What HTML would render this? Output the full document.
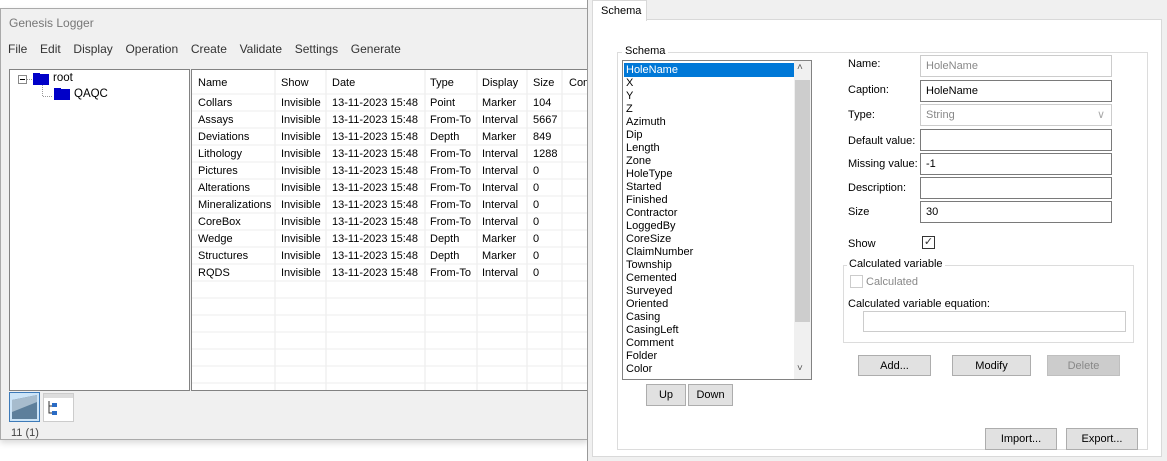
<!DOCTYPE html>
<html><head><style>
*{margin:0;padding:0;box-sizing:border-box}
body{width:1167px;height:461px;position:relative;overflow:hidden;background:#fff;font-family:"Liberation Sans",sans-serif;font-size:11px;color:#000}
.a{position:absolute;white-space:nowrap}
.lw{left:0;top:8px;width:588px;height:432px;background:#f0f0f0;border:1px solid #aaa;box-shadow:0 3px 6px rgba(0,0,0,.15)}
.menu span{margin-right:12.7px}
.panel{background:#fff;border:1px solid #828282}
.btn{position:absolute;background:#e1e1e1;border:1px solid #adadad;text-align:center;line-height:20px}
.inp{position:absolute;left:920px;width:192px;height:22px;border:1px solid #7a7a7a;background:#fff;line-height:20px;padding-left:5px}
.lbl{position:absolute;left:848px}
</style></head><body>
<div class="a lw"></div>
<div class="a" style="left:9px;top:16px;color:#777;font-size:12px">Genesis Logger</div>
<div class="a menu" style="left:8px;top:42px;color:#333;font-size:12px"><span>File</span><span>Edit</span><span>Display</span><span>Operation</span><span>Create</span><span>Validate</span><span>Settings</span><span>Generate</span></div>
<div class="a panel" style="left:9px;top:69px;width:181px;height:322px"></div>
<svg class="a" style="left:17px;top:72px" width="100" height="32">
<rect x="1.5" y="3.5" width="8" height="8" fill="#fff" stroke="#888"/><line x1="3" y1="7.5" x2="8" y2="7.5" stroke="#000"/>
<path d="M10 7.5H16M25.5 13V24.5H36" stroke="#999" stroke-dasharray="1 1" fill="none"/>
<rect x="16" y="2" width="16" height="11" fill="#0000c8"/><rect x="16" y="1" width="7" height="3" fill="#0000c8"/>
<rect x="37" y="17" width="16" height="11" fill="#0000c8"/><rect x="37" y="16" width="7" height="3" fill="#0000c8"/>
</svg>
<div class="a" style="left:53px;top:72px;font-size:11.5px">root</div>
<div class="a" style="left:74px;top:88px;font-size:11.5px">QAQC</div>
<div class="a panel" style="left:191px;top:69px;width:397px;height:322px;border-right:none"></div>
<svg class="a" style="left:192px;top:70px" width="396" height="320">
<g stroke="#e8e8e8">
<line x1="83" y1="0" x2="83" y2="320"/><line x1="134" y1="0" x2="134" y2="320"/><line x1="233" y1="0" x2="233" y2="320"/><line x1="285" y1="0" x2="285" y2="320"/><line x1="335" y1="0" x2="335" y2="320"/><line x1="370" y1="0" x2="370" y2="320"/>
</g>
<g stroke="#eee">
<line x1="0" y1="24" x2="396" y2="24"/><line x1="0" y1="41" x2="396" y2="41"/><line x1="0" y1="58" x2="396" y2="58"/><line x1="0" y1="75" x2="396" y2="75"/><line x1="0" y1="92" x2="396" y2="92"/><line x1="0" y1="109" x2="396" y2="109"/><line x1="0" y1="126" x2="396" y2="126"/><line x1="0" y1="143" x2="396" y2="143"/><line x1="0" y1="160" x2="396" y2="160"/><line x1="0" y1="177" x2="396" y2="177"/><line x1="0" y1="194" x2="396" y2="194"/><line x1="0" y1="211" x2="396" y2="211"/><line x1="0" y1="228" x2="396" y2="228"/><line x1="0" y1="245" x2="396" y2="245"/><line x1="0" y1="262" x2="396" y2="262"/><line x1="0" y1="279" x2="396" y2="279"/><line x1="0" y1="296" x2="396" y2="296"/><line x1="0" y1="313" x2="396" y2="313"/>
</g></svg>
<div class="a" style="left:198px;top:77px">Name</div><div class="a" style="left:281px;top:77px">Show</div><div class="a" style="left:332px;top:77px">Date</div><div class="a" style="left:430px;top:77px">Type</div><div class="a" style="left:482px;top:77px">Display</div><div class="a" style="left:533px;top:77px">Size</div><div class="a" style="left:569px;top:77px">Com</div>
<div class="a" style="left:198px;top:95px;line-height:17px">Collars<br>Assays<br>Deviations<br>Lithology<br>Pictures<br>Alterations<br>Mineralizations<br>CoreBox<br>Wedge<br>Structures<br>RQDS</div>
<div class="a" style="left:281px;top:95px;line-height:17px">Invisible<br>Invisible<br>Invisible<br>Invisible<br>Invisible<br>Invisible<br>Invisible<br>Invisible<br>Invisible<br>Invisible<br>Invisible</div>
<div class="a" style="left:332px;top:95px;line-height:17px">13-11-2023 15:48<br>13-11-2023 15:48<br>13-11-2023 15:48<br>13-11-2023 15:48<br>13-11-2023 15:48<br>13-11-2023 15:48<br>13-11-2023 15:48<br>13-11-2023 15:48<br>13-11-2023 15:48<br>13-11-2023 15:48<br>13-11-2023 15:48</div>
<div class="a" style="left:430px;top:95px;line-height:17px">Point<br>From-To<br>Depth<br>From-To<br>From-To<br>From-To<br>From-To<br>From-To<br>Depth<br>Depth<br>From-To</div>
<div class="a" style="left:482px;top:95px;line-height:17px">Marker<br>Interval<br>Marker<br>Interval<br>Interval<br>Interval<br>Interval<br>Interval<br>Marker<br>Marker<br>Interval</div>
<div class="a" style="left:533px;top:95px;line-height:17px">104<br>5667<br>849<br>1288<br>0<br>0<br>0<br>0<br>0<br>0<br>0</div>
<svg class="a" style="left:9px;top:392px" width="70" height="32">
<rect x="0.5" y="0.5" width="30" height="29" fill="#cce4f7" stroke="#3d7ab8"/>
<path d="M3 8L28 3V27H3Z" fill="#5d7f9b"/><path d="M3 8L28 3V10L3 20Z" fill="#a7bccd"/>
<rect x="34.5" y="1.5" width="30" height="28" fill="#fff" stroke="#ccc"/><rect x="35" y="2" width="29" height="4" fill="#ddd"/>
<path d="M40 9V21H44M40 14H44" stroke="#333" fill="none"/><rect x="43" y="11" width="5" height="4" fill="#2a6bc4"/><rect x="43" y="19" width="5" height="4" fill="#2a6bc4"/>
</svg>
<div class="a" style="left:11px;top:427px;color:#444;font-size:11px">11 (1)</div>

<div class="a" style="left:587px;top:0;width:580px;height:461px;background:#f0f0f0;border-left:1px solid #999"></div>
<div class="a" style="left:592px;top:19px;width:570px;height:438px;background:#fff;border:1px solid #d9d9d9"></div>
<div class="a" style="left:592px;top:0;width:55px;height:21px;background:#fff;border:1px solid #d9d9d9;border-bottom:none;padding:4px 0 0 8px">Schema</div>
<div class="a" style="left:617px;top:52px;width:531px;height:398px;border:1px solid #dcdcdc"></div>
<div class="a" style="left:622px;top:45px;background:#fff;padding:0 3px">Schema</div>
<div class="a" style="left:622px;top:60px;width:190px;height:320px;border:1px solid #828282;background:#fff;overflow:hidden">
<div style="position:absolute;left:1px;top:2px;width:170px;height:14px;background:#0078d7"></div>
<div style="position:absolute;left:3px;top:3px;line-height:13px;font-size:11px"><span style="color:#fff">HoleName</span><br>X<br>Y<br>Z<br>Azimuth<br>Dip<br>Length<br>Zone<br>HoleType<br>Started<br>Finished<br>Contractor<br>LoggedBy<br>CoreSize<br>ClaimNumber<br>Township<br>Cemented<br>Surveyed<br>Oriented<br>Casing<br>CasingLeft<br>Comment<br>Folder<br>Color<br>.</div>
<div style="position:absolute;left:171px;top:0;width:17px;height:318px;background:#f0f0f0"></div>
<div style="position:absolute;left:172px;top:19px;width:15px;height:242px;background:#cdcdcd"></div>
<div style="position:absolute;left:174px;top:1px;font-size:10px;color:#555">&#x02C4;</div>
<div style="position:absolute;left:174px;top:302px;font-size:10px;color:#555">&#x02C5;</div>
</div>
<div class="btn" style="left:646px;top:384px;width:40px;height:22px">Up</div>
<div class="btn" style="left:688px;top:384px;width:45px;height:22px">Down</div>
<div class="lbl" style="top:58px">Name:</div><div class="inp" style="top:55px;border-color:#ccc;color:#888">HoleName</div>
<div class="lbl" style="top:84px">Caption:</div><div class="inp" style="top:80px">HoleName</div>
<div class="lbl" style="top:109px">Type:</div><div class="inp" style="top:104px;border-color:#ccc;color:#888">String<span style="position:absolute;right:6px;color:#aaa">&#x2228;</span></div>
<div class="lbl" style="top:135px">Default value:</div><div class="inp" style="top:129px"></div>
<div class="lbl" style="top:158px">Missing value:</div><div class="inp" style="top:153px">-1</div>
<div class="lbl" style="top:182px">Description:</div><div class="inp" style="top:177px"></div>
<div class="lbl" style="top:206px">Size</div><div class="inp" style="top:201px">30</div>
<div class="lbl" style="top:238px">Show</div>
<div class="a" style="left:922px;top:236px;width:13px;height:13px;border:1px solid #333;font-size:11px;line-height:11px;text-align:center;color:#333">&#x2713;</div>
<div class="a" style="left:843px;top:265px;width:291px;height:78px;border:1px solid #dcdcdc"></div>
<div class="a" style="left:847px;top:258px;background:#fff;padding:0 2px">Calculated variable</div>
<div class="a" style="left:850px;top:275px;width:13px;height:13px;border:1px solid #ccc"></div>
<div class="a" style="left:866px;top:276px;color:#888">Calculated</div>
<div class="a" style="left:848px;top:298px">Calculated variable equation:</div>
<div class="a" style="left:863px;top:311px;width:263px;height:21px;border:1px solid #ccc"></div>
<div class="btn" style="left:858px;top:355px;width:73px;height:21px">Add...</div>
<div class="btn" style="left:952px;top:355px;width:79px;height:21px">Modify</div>
<div class="btn" style="left:1047px;top:355px;width:73px;height:21px;background:#ccc;border-color:#bfbfbf;color:#888">Delete</div>
<div class="btn" style="left:985px;top:428px;width:72px;height:22px">Import...</div>
<div class="btn" style="left:1066px;top:428px;width:72px;height:22px">Export...</div>
</body></html>
